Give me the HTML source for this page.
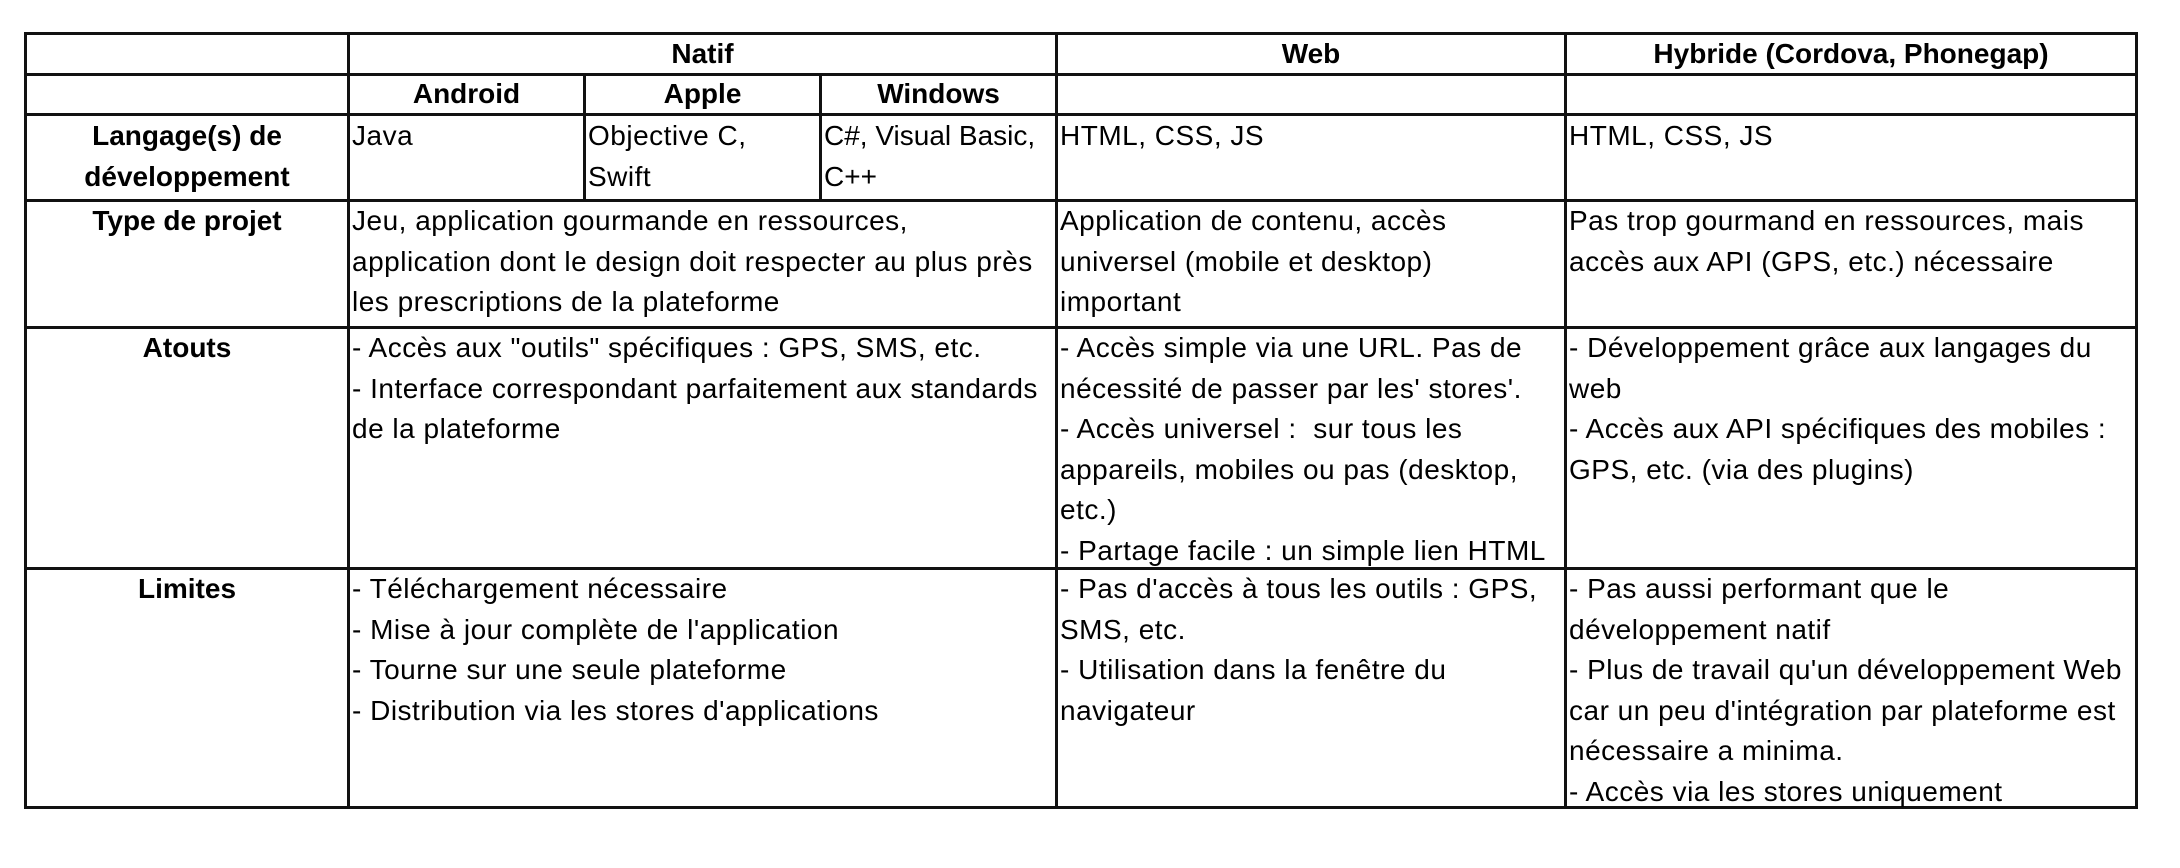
<!DOCTYPE html>
<html><head><meta charset="utf-8"><style>
html,body{margin:0;padding:0;background:#fff;}
body{width:2180px;height:868px;position:relative;overflow:hidden;font-family:"Liberation Sans",Arial,sans-serif;font-size:28px;letter-spacing:0.5px;color:#000;}
.h{position:absolute;background:#111;height:3px;}
.v{position:absolute;background:#111;width:3px;}
.c{position:absolute;line-height:40.5px;white-space:nowrap;}
.b{font-weight:bold;text-align:center;letter-spacing:0;}
</style></head><body>
<div class="h" style="left:24px;width:2114px;top:32px"></div>
<div class="h" style="left:24px;width:2114px;top:73px"></div>
<div class="h" style="left:24px;width:2114px;top:113px"></div>
<div class="h" style="left:24px;width:2114px;top:199px"></div>
<div class="h" style="left:24px;width:2114px;top:326px"></div>
<div class="h" style="left:24px;width:2114px;top:567px"></div>
<div class="h" style="left:24px;width:2114px;top:806px"></div>
<div class="v" style="left:24px;top:32px;height:777px"></div>
<div class="v" style="left:347px;top:32px;height:777px"></div>
<div class="v" style="left:583px;top:73px;height:128px"></div>
<div class="v" style="left:819px;top:73px;height:128px"></div>
<div class="v" style="left:1055px;top:32px;height:777px"></div>
<div class="v" style="left:1564px;top:32px;height:777px"></div>
<div class="v" style="left:2135px;top:32px;height:777px"></div>

<div class="c b" style="left:350px;width:705px;top:34px">Natif</div>
<div class="c b" style="left:1058px;width:506px;top:34px">Web</div>
<div class="c b" style="left:1567px;width:568px;top:34px">Hybride (Cordova, Phonegap)</div>
<div class="c b" style="left:350px;width:233px;top:74px">Android</div>
<div class="c b" style="left:586px;width:233px;top:74px">Apple</div>
<div class="c b" style="left:822px;width:233px;top:74px">Windows</div>

<div class="c b" style="left:27px;width:320px;top:116px">Langage(s) de<br>développement</div>
<div class="c b" style="left:27px;width:320px;top:201px">Type de projet</div>
<div class="c b" style="left:27px;width:320px;top:328px">Atouts</div>
<div class="c b" style="left:27px;width:320px;top:569px">Limites</div>

<div class="c" style="left:352px;top:116px">Java</div>
<div class="c" style="left:588px;top:116px">Objective C,<br>Swift</div>
<div class="c" style="left:824px;top:116px;letter-spacing:0">C#, Visual Basic,<br>C++</div>
<div class="c" style="left:1060px;top:116px">HTML, CSS, JS</div>
<div class="c" style="left:1569px;top:116px">HTML, CSS, JS</div>

<div class="c" style="left:352px;top:201px">Jeu, application gourmande en ressources,<br>application dont le design doit respecter au plus près<br>les prescriptions de la plateforme</div>
<div class="c" style="left:1060px;top:201px">Application de contenu, accès<br>universel (mobile et desktop)<br>important</div>
<div class="c" style="left:1569px;top:201px">Pas trop gourmand en ressources, mais<br>accès aux API (GPS, etc.) nécessaire</div>

<div class="c" style="left:352px;top:328px">- Accès aux "outils" spécifiques : GPS, SMS, etc.<br>- Interface correspondant parfaitement aux standards<br>de la plateforme</div>
<div class="c" style="left:1060px;top:328px">- Accès simple via une URL. Pas de<br>nécessité de passer par les' stores'.<br>- Accès universel :&nbsp; sur tous les<br>appareils, mobiles ou pas (desktop,<br>etc.)<br>- Partage facile : un simple lien HTML</div>
<div class="c" style="left:1569px;top:328px">- Développement grâce aux langages du<br>web<br>- Accès aux API spécifiques des mobiles :<br>GPS, etc. (via des plugins)</div>

<div class="c" style="left:352px;top:569px">- Téléchargement nécessaire<br>- Mise à jour complète de l'application<br>- Tourne sur une seule plateforme<br>- Distribution via les stores d'applications</div>
<div class="c" style="left:1060px;top:569px">- Pas d'accès à tous les outils : GPS,<br>SMS, etc.<br>- Utilisation dans la fenêtre du<br>navigateur</div>
<div class="c" style="left:1569px;top:569px">- Pas aussi performant que le<br>développement natif<br>- Plus de travail qu'un développement Web<br>car un peu d'intégration par plateforme est<br>nécessaire a minima.<br>- Accès via les stores uniquement</div>
</body></html>
